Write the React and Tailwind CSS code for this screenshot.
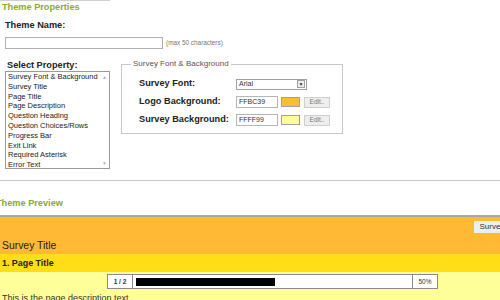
const properties = [
  "Survey Font & Background",
  "Survey Title",
  "Page Title",
  "Page Description",
  "Question Heading",
  "Question Choices/Rows",
  "Progress Bar",
  "Exit Link",
  "Required Asterisk",
  "Error Text"
];

function ColorRow({ label, value, color }) {
  return (
    <div className="flex h-[12px] items-center">
      <span className="w-[97px] text-[9.2px] font-bold text-[#222]">{label}</span>
      <div className="flex h-[12px] w-[42px] items-center border border-[#b5b5b5] bg-white pl-[2px] text-[7px] text-[#333]">
        {value}
      </div>
      <div className={`ml-[3px] h-[10px] w-[19px] border border-[#a0a0a0] ${color}`} />
      <div className="ml-[4px] flex h-[11px] w-[26px] items-center justify-center border border-[#cfcfcf] bg-[#eeeeee] text-[6.5px] text-[#777]">
        Edit..
      </div>
    </div>
  );
}

export default function App() {
  return (
    <div className="relative h-[300px] w-[500px] overflow-hidden bg-white font-['Liberation_Sans',Arial,sans-serif]">
      <div className="h-px w-[110px] bg-[#d0d0d0]" />
      <div className="h-[12px] pl-[2px] text-[9.2px] font-bold leading-[12px] text-[#8aaa3a]">
        Theme Properties
      </div>

      <div className="mt-[6px] h-[12px] pl-[5px] text-[9.2px] font-bold leading-[12px] text-[#222]">
        Theme Name:
      </div>
      <div className="mt-[6px] flex h-[12px] items-center pl-[5px]">
        <div className="h-[12px] w-[158px] border border-[#b0b0b0] bg-white" />
        <span className="ml-[3px] text-[6.4px] text-[#777]">(max 50 characters)</span>
      </div>

      <div className="flex">
        <div>
          <div className="mt-[10px] h-[12px] pl-[7px] text-[9.2px] font-bold leading-[12px] text-[#222]">
            Select Property:
          </div>
          <div className="ml-[5px] flex h-[98px] w-[105px] border border-[#9a9a9a] bg-white">
            <ul className="flex-1 pl-[2px] text-[7.5px] leading-[9.8px] text-[#222]">
              {properties.map((p) => (
                <li key={p} className="whitespace-nowrap">{p}</li>
              ))}
            </ul>
            <div className="flex w-[9px] flex-col items-center justify-between py-[2px] text-[5px] leading-[6px] text-[#b0b0b0]">
              <span>▲</span>
              <span>▼</span>
            </div>
          </div>
        </div>

        <fieldset className="ml-[11px] mt-[10px] h-fit w-[222px] border border-[#c8c8c8] px-0 pb-[7px] pt-[9px]">
          <legend className="ml-[9px] px-[2px] text-[8px] leading-[10px] text-[#555]">
            Survey Font &amp; Background
          </legend>
          <div className="flex flex-col gap-[6px] pl-[17px]">
            <div className="flex h-[12px] items-center">
              <span className="w-[97px] text-[9.2px] font-bold text-[#222]">Survey Font:</span>
              <div className="flex h-[11px] w-[71px] items-center border border-[#a0a0a0] bg-white">
                <span className="flex-1 pl-[2px] text-[7px] text-[#333]">Arial</span>
                <div className="mr-px flex h-[8px] w-[8px] items-center justify-center border border-[#a0a0a0] bg-[#eee] text-[5px] leading-none text-[#333]">
                  ▼
                </div>
              </div>
            </div>
            <ColorRow label="Logo Background:" value="FFBC39" color="bg-[#ffbc39]" />
            <ColorRow label="Survey Background:" value="FFFF99" color="bg-[#ffff99]" />
          </div>
        </fieldset>
      </div>

      <div className="mt-[11px] h-px bg-[#c8c8c8]" />

      <div className="ml-[-4px] mt-[16px] h-[12px] text-[9.2px] font-bold leading-[12px] text-[#8aaa3a]">
        Theme Preview
      </div>
      <div className="mt-[6px] h-[2px] bg-[#a8a8a0]" />

      <div className="bg-[#ffb935] pb-[2px] pt-[4px]">
        <div className="flex h-[12px] justify-end">
          <div className="mr-[-24px] flex h-[12px] items-center bg-[#eeeeee] pl-[6px] pr-[4px] text-[8px] text-[#333]">
            Survey Exit
          </div>
        </div>
        <div className="mt-[7px] h-[12px] pl-[2px] text-[10.4px] leading-[12px] text-[#222]">
          Survey Title
        </div>
      </div>

      <div className="h-[18px] bg-[#ffdd17] pl-[2px] text-[8.9px] font-bold leading-[18px] text-[#222]">
        1. Page Title
      </div>

      <div className="h-[40px] bg-[#ffff99] pt-[2px]">
        <div className="ml-[107px] flex h-[15px] w-[331px] border border-[#8a8a8a] bg-white">
          <div className="flex w-[25px] items-center justify-center border-r border-[#8a8a8a] text-[6.5px] font-bold text-[#333]">
            1 / 2
          </div>
          <div className="flex flex-1 items-center pl-[3px]">
            <div className="h-[8px] w-[139px] bg-black" />
          </div>
          <div className="flex w-[25px] items-center justify-center border-l border-[#8a8a8a] text-[6.5px] text-[#333]">
            50%
          </div>
        </div>
        <div className="mt-[4px] pl-[2px] text-[9px] leading-[11px] text-[#333]">
          This is the page description text.
        </div>
      </div>
    </div>
  );
}
